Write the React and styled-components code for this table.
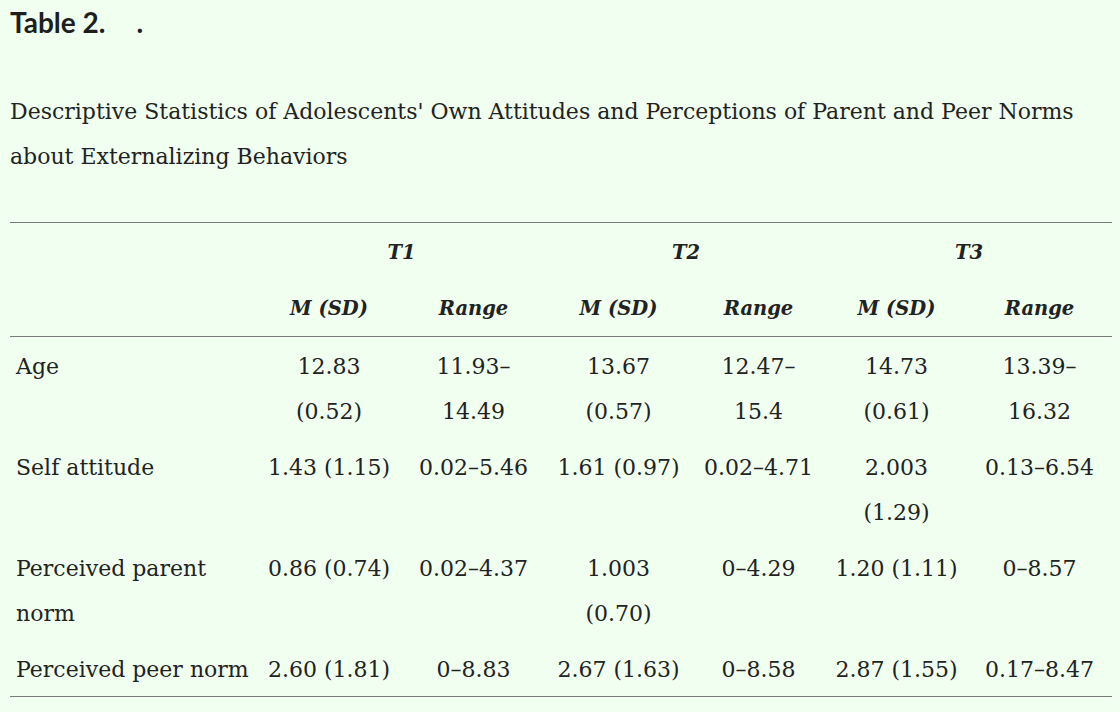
import React from "react";
import styled, { createGlobalStyle } from "styled-components";

const Global = createGlobalStyle`
  html, body { margin: 0; padding: 0; background: #f1fff0; }
  body { color: #222; }
`;

const Page = styled.div`
  padding: 0 8px 0 10px;
  background: #f1fff0;
  min-height: 712px;
  box-sizing: border-box;
`;

const TitleBar = styled.div`
  display: flex;
  align-items: baseline;
  height: 44px;
  font-family: Lato, "Open Sans", sans-serif;
  font-weight: 700;
  font-size: 28px;
  line-height: 44px;
  color: #1e1e1e;
`;

const Dot = styled.span`
  margin-left: 31px;
  font-weight: 700;
`;

const Caption = styled.p`
  margin: 45px 0 43px;
  font-family: "DejaVu Serif", serif;
  font-size: 22px;
  line-height: 45px;
  color: #222;
`;

const Table = styled.table`
  width: 100%;
  border-collapse: collapse;
  table-layout: fixed;
  font-family: "DejaVu Serif", serif;
  font-size: 22px;
  line-height: 45px;
  color: #222;
  border-top: 1px solid #7a7a7a;
  border-bottom: 1px solid #7a7a7a;
`;

const HeadRow = styled.tr`
  border-bottom: ${(p) => (p.$ruled ? "1px solid #7a7a7a" : "none")};
  & > th {
    padding-bottom: ${(p) => (p.$ruled ? "5px" : "4px")};
  }
`;

const Th = styled.th`
  padding: 7px 8px 4px;
  font-size: 19.5px;
  font-weight: 700;
  font-style: italic;
  text-align: center;
  vertical-align: top;
`;

const Td = styled.td`
  padding: ${(p) => (p.$label ? "7px 4px 4px 6px" : "7px 8px 4px")};
  text-align: ${(p) => (p.$label ? "left" : "center")};
  vertical-align: top;
`;

const rows = [
  ["Age", "12.83 (0.52)", "11.93–14.49", "13.67 (0.57)", "12.47–15.4", "14.73 (0.61)", "13.39–16.32"],
  ["Self attitude", "1.43 (1.15)", "0.02–5.46", "1.61 (0.97)", "0.02–4.71", "2.003 (1.29)", "0.13–6.54"],
  ["Perceived parent norm", "0.86 (0.74)", "0.02–4.37", "1.003 (0.70)", "0–4.29", "1.20 (1.11)", "0–8.57"],
  ["Perceived peer norm", "2.60 (1.81)", "0–8.83", "2.67 (1.63)", "0–8.58", "2.87 (1.55)", "0.17–8.47"],
];

const widths = [247, 144, 145, 145, 135, 141, 145];

export default function App() {
  return (
    <Page>
      <Global />
      <TitleBar>
        Table 2.<Dot>.</Dot>
      </TitleBar>
      <Caption>
        Descriptive Statistics of Adolescents' Own Attitudes and Perceptions of Parent and Peer Norms about Externalizing Behaviors
      </Caption>
      <Table>
        <colgroup>
          {widths.map((w, i) => (
            <col key={i} style={{ width: w }} />
          ))}
        </colgroup>
        <thead>
          <HeadRow>
            <Th />
            <Th colSpan={2}>T1</Th>
            <Th colSpan={2}>T2</Th>
            <Th colSpan={2}>T3</Th>
          </HeadRow>
          <HeadRow $ruled>
            <Th />
            <Th>M (SD)</Th>
            <Th>Range</Th>
            <Th>M (SD)</Th>
            <Th>Range</Th>
            <Th>M (SD)</Th>
            <Th>Range</Th>
          </HeadRow>
        </thead>
        <tbody>
          {rows.map((r) => (
            <tr key={r[0]}>
              {r.map((c, i) => (
                <Td key={i} $label={i === 0}>
                  {c}
                </Td>
              ))}
            </tr>
          ))}
        </tbody>
      </Table>
    </Page>
  );
}
